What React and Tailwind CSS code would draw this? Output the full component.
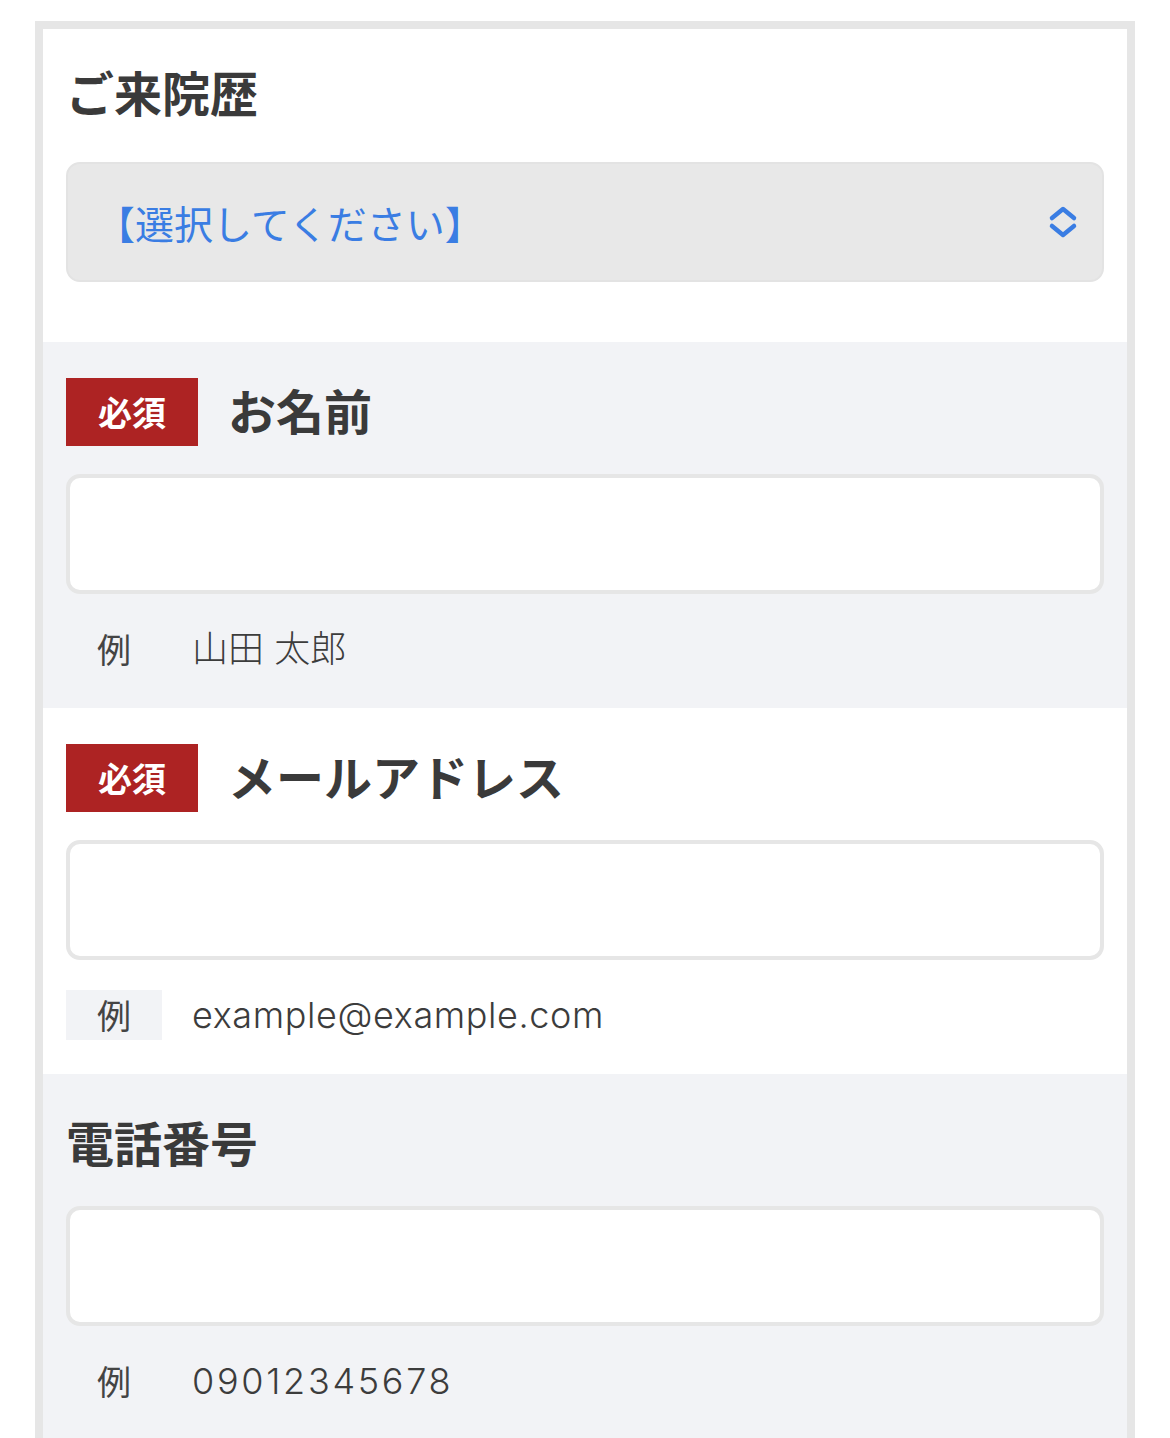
const jp = { fontFamily: '"Noto Sans CJK JP", "Noto Sans", sans-serif' }
const latin = { fontFamily: 'Inter, "Noto Sans CJK JP", sans-serif' }

function Badge() {
  return (
    <span className="flex h-[68px] w-[132px] shrink-0 items-center justify-center bg-[#ad2323] text-[34px] font-bold leading-none text-white">
      必須
    </span>
  )
}

function TextInput() {
  return (
    <input
      type="text"
      className="block h-[120px] w-full rounded-[14px] border-4 border-[#e6e6e6] bg-white px-6 text-[36px] outline-none"
    />
  )
}

function Field({ label, required, example, tracking, bg }) {
  return (
    <section className={`px-[23px] pt-[36px] pb-[34px] ${bg}`}>
      <div className="flex h-[68px] items-center">
        {required && <Badge />}
        <h2 className={`pb-[6px] text-[48px] font-bold leading-none text-[#3a3a3a] ${required ? "ml-[30px]" : ""}`}>
          {label}
        </h2>
      </div>
      <div className="mt-[28px]">
        <TextInput />
      </div>
      <div className="mt-[30px] flex h-[50px] items-center">
        <span className="flex h-full w-[96px] items-center justify-center bg-[#f2f3f6] text-[34px] leading-none text-[#444]">
          例
        </span>
        <span className={`ml-[30px] text-[36px] font-light leading-none text-[#3c3c3c] ${tracking}`} style={latin}>
          {example}
        </span>
      </div>
    </section>
  )
}

export default function App() {
  return (
    <div className="min-h-[1438px] bg-white pl-[35px] pt-[21px]" style={jp}>
      <div className="w-[1100px] border-x-[8px] border-t-[8px] border-[#e6e6e6]">
        <section className="bg-white px-[23px] pt-[28px] pb-[60px]">
          <div className="flex h-[68px] items-center">
            <h2 className="text-[48px] font-bold leading-none text-[#3a3a3a]">ご来院歴</h2>
          </div>
          <div className="mt-[37px] flex h-[120px] items-center justify-between rounded-[14px] border-2 border-[#e3e3e3] bg-[#e8e8e8] pl-[28px] pr-[24px]">
            <span className="text-[39px] leading-none text-[#3a7de3]">【選択してください】</span>
            <svg width="30" height="32" viewBox="0 0 30 32" fill="none" stroke="#3a7de3" strokeWidth="4.5" strokeLinecap="round" strokeLinejoin="round">
              <path d="M4 12 L15 3 L26 12" />
              <path d="M4 20 L15 29 L26 20" />
            </svg>
          </div>
        </section>
        <Field label="お名前" required example="山田 太郎" tracking="" bg="bg-[#f2f3f6]" />
        <Field label="メールアドレス" required example="example@example.com" tracking="tracking-[0.6px]" bg="bg-white" />
        <Field label="電話番号" example="09012345678" tracking="tracking-[2.7px]" bg="bg-[#f2f3f6]" />
      </div>
    </div>
  )
}
